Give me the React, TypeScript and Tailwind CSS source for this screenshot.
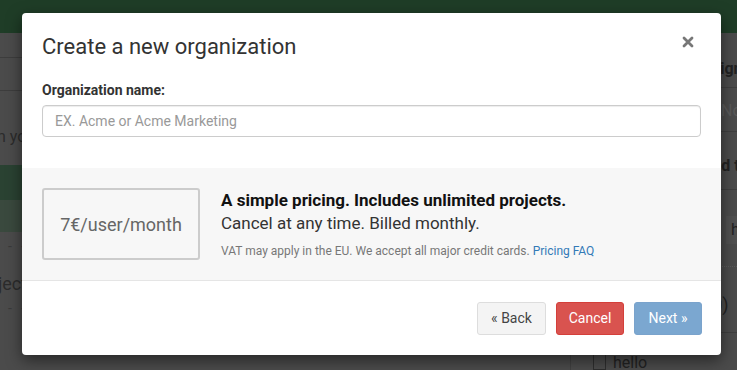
import React from "react";

function CloseIcon() {
  return (
    <svg width="12" height="12" viewBox="0 0 12 12" aria-hidden>
      <path d="M2 2 L10 10 M10 2 L2 10" stroke="#777" strokeWidth="2.8" strokeLinecap="round" />
    </svg>
  );
}

function Backdrop() {
  return (
    <div className="flex flex-col">
      <div className="h-[33px] bg-[#1f3d27]" />
      <div className="flex">
        <div className="w-[570px] shrink-0 whitespace-nowrap text-[#2b2b2b]">
          <div className="h-[25px] border-b border-[#3d3d3d]" />
          <div className="h-[33px] border-b border-[#3d3d3d]" />
          <div className="ml-[-3px] flex h-[74px] items-end pb-[16px] text-[16px]">n your organization</div>
          <div className="h-[35px] bg-[#2a4232]" />
          <div className="h-[32px] bg-[#3a493e]" />
          <div className="h-[30px] pl-[8px] pt-[4px] text-[14px] tracking-[3px] text-[#3a3a3a]">- - - - -</div>
          <div className="ml-[-2px] h-[36px] pt-[8px] text-[18px]">jects</div>
          <div className="h-[30px] pl-[8px] text-[14px] tracking-[3px] text-[#3a3a3a]">- - - - -</div>
        </div>
        <div className="flex min-w-0 flex-1 flex-col overflow-hidden whitespace-nowrap border-l border-[#404040] text-[#222]">
          <div className="h-[55px] border-b border-[#3f3f3f] pl-[122px] pt-[24px] text-[16px] font-bold">Assign</div>
          <div className="h-[44px] border-b border-[#3f3f3f] pl-[150px] pt-[11px] text-[16px] text-[#5a5a5a]">None</div>
          <div className="h-[58px] border-b border-[#3f3f3f] pl-[92px] pt-[22px] text-[16px] font-bold">Assigned to</div>
          <div className="h-[77px] border-b border-dotted border-[#5a5a5a] pl-[155px] pt-[26px]">
            <span className="inline-block bg-[#505050] px-[5px] py-[2px] text-[16px]">hello</span>
          </div>
          <div className="h-[66px] border-b border-[#3f3f3f] pl-[135px] pt-[24px] text-[18px]">(0)</div>
          <div className="flex items-start gap-[7px] pl-[22px] pt-[19px]">
            <span className="inline-block h-[18px] w-[13px] border border-[#2e2e2e]" />
            <span className="mt-[2px] text-[16px] leading-[18px] text-[#222]">hello</span>
          </div>
        </div>
      </div>
    </div>
  );
}

export default function App() {
  return (
    <div className="relative h-[370px] w-[737px] overflow-hidden bg-[#4b4b4b] font-['Roboto',sans-serif]">
      <Backdrop />

      <div className="absolute left-[22px] top-[13px] w-[699px] rounded-[4px] bg-white shadow-[0_5px_15px_rgba(0,0,0,0.5)]">
        <div className="flex items-start justify-between px-[20px] pt-[19px]">
          <h4 className="text-[22px] leading-[30px] text-[#333]">Create a new organization</h4>
          <button className="mr-[7px] mt-[4px]">
            <CloseIcon />
          </button>
        </div>

        <div className="px-[20px] pb-[31px] pt-[20px]">
          <label className="block text-[14px] font-bold leading-[16px] text-[#333]">Organization name:</label>
          <input
            className="mt-[7px] block h-[32px] w-full rounded-[4px] border border-[#ccc] px-[12px] text-[14px] text-[#555] shadow-[inset_0_1px_1px_rgba(0,0,0,0.075)] outline-none placeholder:text-[#999]"
            placeholder="EX. Acme or Acme Marketing"
          />
        </div>

        <div className="flex items-start gap-[21px] border-b border-[#e5e5e5] bg-[#f7f7f7] p-[20px]">
          <div className="flex h-[72px] w-[158px] shrink-0 items-center justify-center rounded-[3px] border-2 border-[#ccc] text-[18px] text-[#666]">
            7€/user/month
          </div>
          <div className="pt-[1px]">
            <div className="text-[17px] font-bold leading-[23px] text-[#111]">A simple pricing. Includes unlimited projects.</div>
            <div className="text-[17px] leading-[23px] text-[#333]">Cancel at any time. Billed monthly.</div>
            <div className="mt-[8px] text-[12px] leading-[16px] text-[#777]">
              VAT may apply in the EU. We accept all major credit cards.{" "}
              <a className="text-[#337ab7]">Pricing FAQ</a>
            </div>
          </div>
        </div>

        <div className="flex justify-end gap-[10px] px-[20px] pb-[20px] pr-[19px] pt-[21px]">
          <button className="h-[33px] w-[69px] rounded-[3px] border border-[#ddd] bg-[#f4f4f4] text-[14px] text-[#444]">
            « Back
          </button>
          <button className="h-[33px] w-[68px] rounded-[3px] border border-[#d43f3a] bg-[#d9534f] text-[14px] text-white">
            Cancel
          </button>
          <button className="h-[33px] w-[68px] rounded-[3px] border border-[#7aa3cc] bg-[#7ba7d0] text-[14px] text-white">
            Next »
          </button>
        </div>
      </div>
    </div>
  );
}
